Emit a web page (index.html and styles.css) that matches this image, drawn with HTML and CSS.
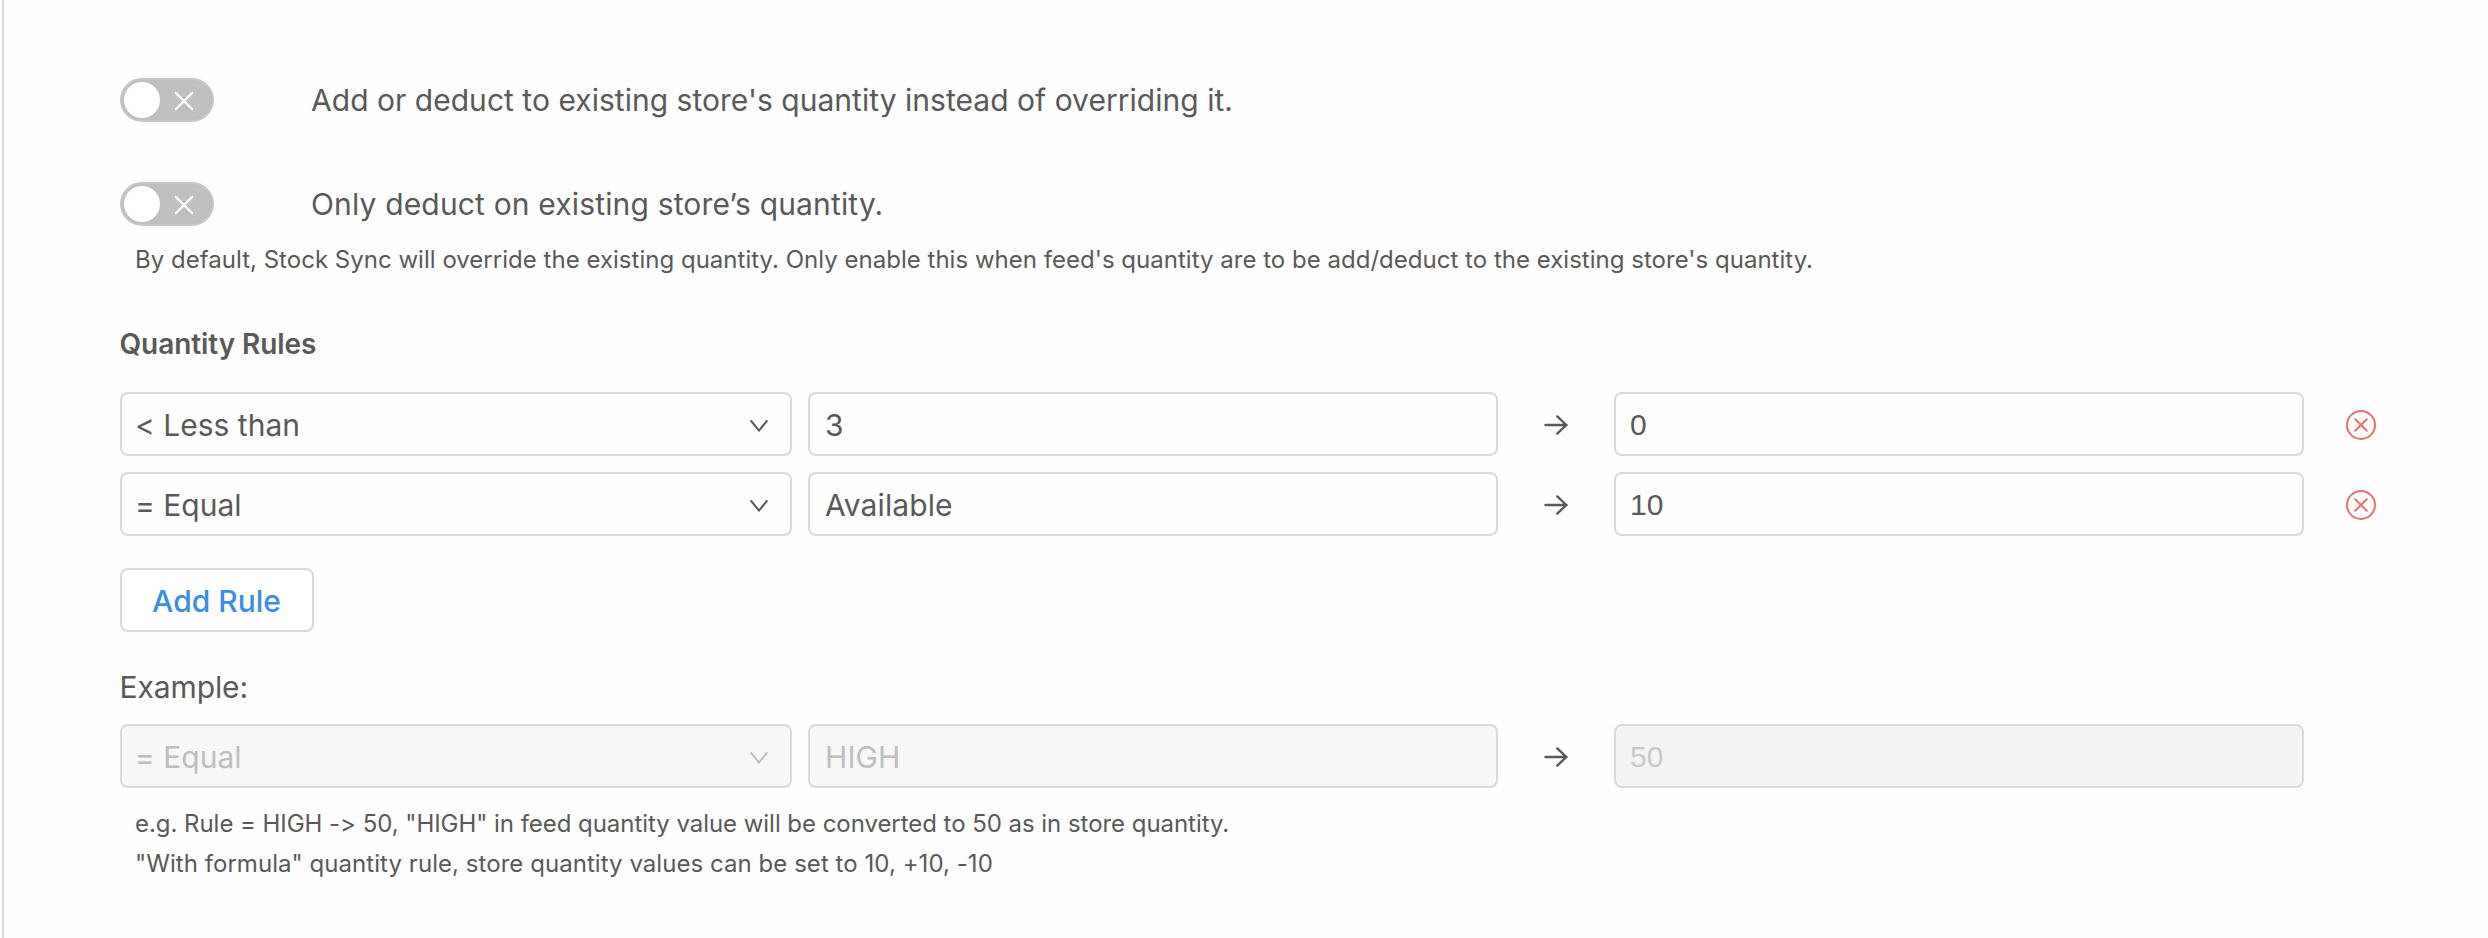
FILE: index.html
```html
<!DOCTYPE html>
<html lang="en">
<head>
<meta charset="utf-8">
<title>Quantity settings</title>
<link rel="stylesheet" href="styles.css">
</head>
<body>
<svg width="0" height="0" class="defs">
  <symbol id="cross" viewBox="0 0 20 20"><path d="M1.7 1.7l16.6 16.6M18.3 1.7L1.7 18.3"/></symbol>
  <symbol id="chevron" viewBox="0 0 18 12"><path d="M1.2 1L9 10.6 16.8 1"/></symbol>
  <symbol id="arrow" viewBox="0 0 24 20"><path d="M1.5 10H22.5M13.3 1.4L22.3 10 13.3 18.6"/></symbol>
  <symbol id="remove" viewBox="0 0 30 30"><circle cx="15" cy="15" r="14"/><path d="M9.2 9.2l11.6 11.6M20.8 9.2L9.2 20.8"/></symbol>
</svg>
<main class="panel">
  <div class="option">
    <button class="switch" aria-label="Add or deduct"><span class="knob"></span><svg class="cross"><use href="#cross"/></svg></button>
    <span class="label">Add or deduct to existing store's quantity instead of overriding it.</span>
  </div>
  <div class="option second">
    <button class="switch" aria-label="Only deduct"><span class="knob"></span><svg class="cross"><use href="#cross"/></svg></button>
    <span class="label">Only deduct on existing store’s quantity.</span>
  </div>
  <p class="hint">By default, Stock Sync will override the existing quantity. Only enable this when feed's quantity are to be add/deduct to the existing store's quantity.</p>
  <h2 class="title">Quantity Rules</h2>
  <div class="rules">
    <div class="rule">
      <div class="field select"><span>&lt; Less than</span><svg class="chevron"><use href="#chevron"/></svg></div>
      <div class="field">3</div>
      <svg class="arrow"><use href="#arrow"/></svg>
      <div class="field number">0</div>
      <svg class="remove"><use href="#remove"/></svg>
    </div>
    <div class="rule">
      <div class="field select"><span>= Equal</span><svg class="chevron"><use href="#chevron"/></svg></div>
      <div class="field">Available</div>
      <svg class="arrow"><use href="#arrow"/></svg>
      <div class="field number">10</div>
      <svg class="remove"><use href="#remove"/></svg>
    </div>
  </div>
  <button class="add">Add Rule</button>
  <p class="example">Example:</p>
  <div class="rule">
    <div class="field select disabled"><span>= Equal</span><svg class="chevron"><use href="#chevron"/></svg></div>
    <div class="field disabled">HIGH</div>
    <svg class="arrow"><use href="#arrow"/></svg>
    <div class="field number disabled">50</div>
  </div>
  <div class="notes">
    <p class="sample">e.g. Rule = HIGH -&gt; 50, "HIGH" in feed quantity value will be converted to 50 as in store quantity.</p>
    <p class="formula">"With formula" quantity rule, store quantity values can be set to 10, +10, -10</p>
  </div>
</main>
</body>
</html>
```
FILE: styles.css
```css
* { box-sizing: border-box; }
body {
  margin: 0;
  background: #fefefe;
  color: #595959;
  font-family: Inter, "Liberation Sans", sans-serif;
  font-size: 30px;
  font-feature-settings: "calt" 0;
}
.defs { position: absolute; }
svg { fill: none; stroke: currentColor; stroke-linecap: round; flex: none; }
p, h2 { margin: 0; }
button { font: inherit; padding: 0; }
.panel {
  min-height: 938px;
  margin-left: 2px;
  border-left: 2px solid #d9d9d9;
  padding: 78px 0 0 116px;
}
.option { display: flex; align-items: center; height: 44px; }
.option.second { margin-top: 60px; }
.label { margin-left: 97px; letter-spacing: 0.03px; }
.second .label { letter-spacing: 0.16px; }
.switch {
  display: flex;
  align-items: center;
  width: 94px;
  height: 44px;
  border: 2px solid #c7c7c7;
  border-radius: 22px;
  padding-left: 2px;
  background: #bfbfbf;
  color: #fff;
}
.knob { width: 36px; height: 36px; border-radius: 50%; background: #fff; }
.cross { width: 20px; height: 20px; margin: 1px 0 0 14px; stroke-width: 2.2; }
.hint, .notes { padding-left: 15px; font-size: 24px; line-height: 40px; }
.hint { margin-top: 14px; letter-spacing: 0.018px; }
.title { margin: 44px 0 0 -0.5px; font-size: 28px; font-weight: 600; line-height: 40px; letter-spacing: -0.08px; }
.rules { display: grid; gap: 16px; margin-top: 28px; }
.rule { display: flex; align-items: center; }
.field {
  display: flex;
  align-items: center;
  width: 690px;
  height: 64px;
  border: 2px solid #d9d9d9;
  border-radius: 8px;
  padding: 2px 14px 0 15px;
  letter-spacing: 0.1px;
}
.field.select { width: 672px; margin-right: 16px; justify-content: space-between; padding-right: 22px; padding-left: 13px; letter-spacing: 0; }
.chevron { width: 18px; height: 12px; margin-top: 2px; stroke-width: 2; }
.field.number { padding-left: 14px; font-family: "Liberation Sans", sans-serif; letter-spacing: 0; }
.arrow { width: 24px; height: 20px; margin: 1px 46px 0; stroke-width: 2.4; }
.remove { width: 30px; height: 30px; margin: 1px 0 0 41.5px; color: #e8736c; stroke-width: 2; }
.disabled { background: #f7f7f7; color: #bfbfbf; }
.disabled.number { background: #f3f3f3; color: #c8c8c8; }
.add {
  display: block;
  width: 194px;
  height: 64px;
  margin-top: 32px;
  border: 2px solid #d9d9d9;
  border-radius: 8px;
  padding: 2px 1px 0 0;
  background: #fff;
  color: #3b8de6;
  font-weight: 500;
}
.example { margin: 35px 0 17px -0.5px; line-height: 40px; letter-spacing: -0.1px; }
.notes { margin-top: 16px; }
.sample { letter-spacing: -0.045px; }
.formula { letter-spacing: 0.05px; }
```
